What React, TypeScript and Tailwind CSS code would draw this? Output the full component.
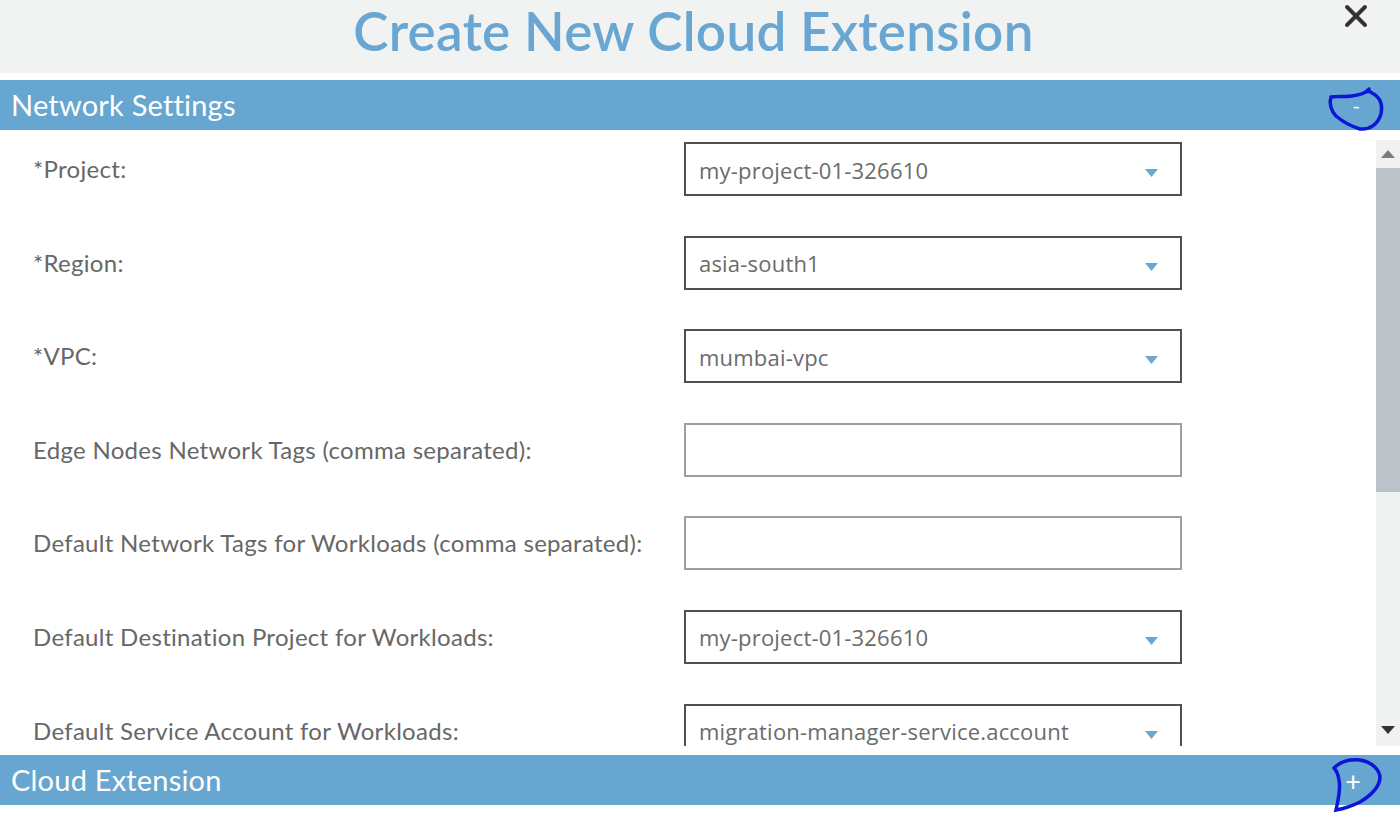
import { X } from "lucide-react";

const fields = [
  { label: "*Project:", value: "my-project-01-326610", select: true },
  { label: "*Region:", value: "asia-south1", select: true },
  { label: "*VPC:", value: "mumbai-vpc", select: true },
  { label: "Edge Nodes Network Tags (comma separated):", value: "", select: false },
  { label: "Default Network Tags for Workloads (comma separated):", value: "", select: false },
  { label: "Default Destination Project for Workloads:", value: "my-project-01-326610", select: true },
  { label: "Default Service Account for Workloads:", value: "migration-manager-service.account", select: true },
];

const Caret = () => (
  <svg width="13" height="8" viewBox="0 0 13 8" className="shrink-0">
    <path d="M0 0 L13 0 L6.5 8 Z" fill="#6aa7d2" />
  </svg>
);

const App = () => {
  return (
    <div className="relative h-[816px] w-[1400px] overflow-hidden bg-white font-['Lato',sans-serif]">
      <div className="relative flex h-[73px] items-center justify-center bg-[#f1f2f2] pr-[13px]">
        <h1 className="mt-[-12px] text-[53px] font-semibold tracking-[0.3px] text-[#69a7d2]">Create New Cloud Extension</h1>
        <div className="absolute right-[26px] top-[-2px] text-[#333]">
          <X size={36} strokeWidth={2.6} />
        </div>
      </div>
      <div className="mt-[7px] flex h-[50px] items-center justify-between bg-[#67a6d0] pl-[11px] pr-[40px] text-white">
        <span className="text-[29px] tracking-[0.2px]">Network Settings</span>
        <span className="text-[20px] leading-none">-</span>
      </div>

      <div className="flex h-[616px]">
        <div className="flex-1 overflow-hidden">
          <div className="flex flex-col gap-[39.6px] pt-[12px]">
            {fields.map((f) => (
              <div key={f.label} className="flex h-[54px] items-center">
                <div className="w-[684px] pl-[33px] text-[24px] tracking-[0.3px] text-[#676767]">{f.label}</div>
                <div
                  className={
                    f.select
                      ? "flex h-[54px] w-[498px] items-center justify-between border-2 border-[#505050] pl-[13px] pr-[22px]"
                      : "flex h-[54px] w-[498px] items-center border-2 border-[#9e9e9e]"
                  }
                >
                  <span className="pt-[2px] font-['Open_Sans',sans-serif] text-[22px] tracking-[0.2px] text-[#6b6b6b]">{f.value}</span>
                  {f.select && (
                    <span className="pt-[8px]">
                      <Caret />
                    </span>
                  )}
                </div>
              </div>
            ))}
          </div>
        </div>
        <div className="flex w-[24px] flex-col bg-white">
          <div className="mt-[10px] flex h-[28px] items-center justify-center bg-[#f0f1f1]">
            <svg width="14" height="8" viewBox="0 0 14 8">
              <path d="M0 8 L14 8 L7 0 Z" fill="#7b7b7b" />
            </svg>
          </div>
          <div className="h-[324px] bg-[#bbc3c8]" />
          <div className="flex flex-1 items-end justify-center bg-[#f0f1f1] pb-[12px]">
            <svg width="14" height="8" viewBox="0 0 14 8">
              <path d="M0 0 L14 0 L7 8 Z" fill="#333" />
            </svg>
          </div>
        </div>
      </div>

      <div className="mt-[9px] flex h-[50px] items-center justify-between bg-[#67a6d0] pl-[11px] pr-[39px] text-white">
        <span className="text-[29px] tracking-[0.2px]">Cloud Extension</span>
        <span className="text-[27px] leading-none">+</span>
      </div>

      <svg className="pointer-events-none absolute left-0 top-0" width="1400" height="816" viewBox="0 0 1400 816" fill="none">
        <path
          d="M1369 89 C1366 93 1360 95 1352 96 C1344 97 1336 96 1331 97 C1329 103 1331 111 1336 116 C1342 121 1350 126 1360 129 C1370 130 1378 124 1381 114 C1383 104 1380 97 1372 93 C1370 91 1368 91 1366 92"
          stroke="#0b16d6"
          strokeWidth="3.5"
          strokeLinecap="round"
        />
        <path
          d="M1334 768 C1340 762 1350 759 1360 760 C1372 762 1380 770 1380 778 C1379 788 1370 796 1360 802 C1352 806 1342 809 1336 810 C1338 800 1341 790 1339 780 C1338 774 1336 770 1334 768"
          stroke="#0b16d6"
          strokeWidth="3.5"
          strokeLinecap="round"
        />
      </svg>
    </div>
  );
};

export default App;
